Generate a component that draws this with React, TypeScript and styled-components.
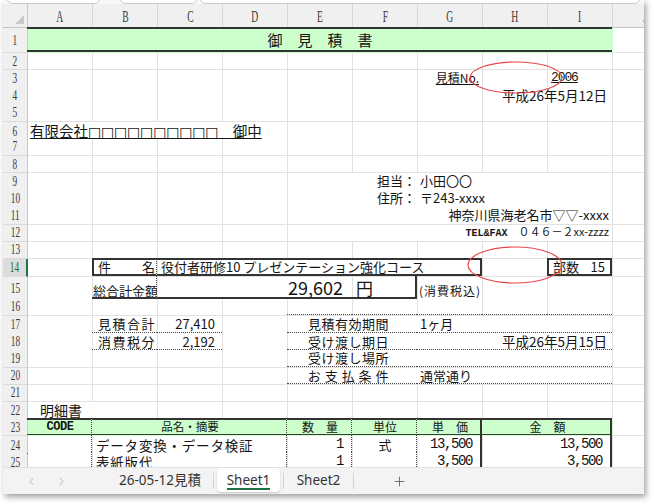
import React from 'react';
import styled, { createGlobalStyle } from 'styled-components';
import { ChevronLeft, ChevronRight, Plus } from 'lucide-react';

const JP = '"Noto Sans CJK JP", "Noto Sans", sans-serif';
const MONO = '"Liberation Mono", "DejaVu Sans Mono", "Noto Sans CJK JP", monospace';
const SERIF = '"Liberation Serif", "DejaVu Serif", serif';
const UI = '"Noto Sans", "Noto Sans CJK JP", sans-serif';
const GREEN = '#ccffcc';
const GRID = '#e1e1e1';
const COLS = '25px repeat(10, 65px)';

type Line = 'solid' | 'thin' | 'dot';
const line = (b?: Line) =>
  b === 'solid' ? '2px solid #333' : b === 'thin' ? '1px solid #3a3a3a' : b === 'dot' ? '1px dotted #444' : 'none';

interface CellDef {
  c: number;
  s?: number;
  t?: React.ReactNode;
  a?: 'left' | 'right' | 'center' | 'between';
  fill?: string;
  size?: number;
  font?: 'jp' | 'mono';
  bt?: Line;
  bb?: Line;
  bl?: Line;
  br?: Line;
  pl?: number;
  pr?: number;
  open?: boolean;
  u?: boolean;
  ls?: number;
  bold?: boolean;
  mid?: boolean;
  clip?: boolean;
}

const GlobalStyle = createGlobalStyle`
  html, body { margin: 0; padding: 0; background: #fff; }
  body { font-family: ${JP}; }
  * { box-sizing: border-box; }
`;

const Page = styled.div`
  width: 654px;
  height: 504px;
  padding: 0 10px 10px 3px;
`;

const Window = styled.div`
  position: relative;
  height: 100%;
  display: flex;
  flex-direction: column;
  background: #fff;
  overflow: hidden;
  box-shadow: 2px 3px 6px rgba(0, 0, 0, 0.38);
`;

const TopStrip = styled.div`
  flex: none;
  height: 4px;
  display: flex;
  align-items: flex-end;
  background: #f7f7f7;
  overflow: hidden;
`;

const StripBox = styled.div<{ $w: number; $ml: number }>`
  flex: none;
  width: ${p => p.$w}px;
  margin-left: ${p => p.$ml}px;
  height: 10px;
  border: 1px solid #c9c9c9;
  border-radius: 5px;
  background: #fff;
`;

const Sheet = styled.div`
  flex: 1;
  min-height: 0;
  overflow: hidden;
  display: flex;
  flex-direction: column;
`;

const Row = styled.div<{ $h: number }>`
  flex: none;
  display: grid;
  grid-template-columns: ${COLS};
  height: ${p => p.$h}px;
`;

const Corner = styled.div`
  background: #f0f0f0;
  border-right: 1px solid #c8c8c8;
  border-bottom: 1px solid #c4c4c4;
  display: flex;
  align-items: flex-end;
  justify-content: flex-end;
  padding: 0 3px 3px 0;
`;

const ColHead = styled.div`
  background: #f0f0f0;
  border-right: 1px solid #d6d6d6;
  border-bottom: 1px solid #c4c4c4;
  display: flex;
  align-items: flex-end;
  justify-content: center;
  padding-bottom: 2px;
  font-family: ${SERIF};
  font-size: 16px;
  line-height: 1;
  color: #3a3a3a;
`;

const RowHead = styled.div<{ $active?: boolean }>`
  background: ${p => (p.$active ? '#dcdcdc' : '#f0f0f0')};
  border-right: ${p => (p.$active ? '2px solid #217346' : '1px solid #c8c8c8')};
  border-bottom: 1px solid #dadada;
  display: flex;
  align-items: center;
  justify-content: center;
  font-family: ${SERIF};
  font-size: 15px;
  line-height: 1;
  color: ${p => (p.$active ? '#1d6a3d' : '#3a3a3a')};
`;

const Narrow = styled.span<{ $sx: number }>`
  display: inline-block;
  transform: scaleX(${p => p.$sx});
`;

const justify = (a: string) =>
  a === 'right' ? 'flex-end' : a === 'center' ? 'center' : 'flex-start';

const CellBox = styled.div<{
  $span: number;
  $align: string;
  $fill?: string;
  $open?: boolean;
  $pl: number;
  $pr: number;
  $mid?: boolean;
  $bt?: Line;
  $bb?: Line;
  $bl?: Line;
  $br?: Line;
}>`
  position: relative;
  grid-column: span ${p => p.$span};
  min-width: 0;
  display: flex;
  align-items: ${p => (p.$mid ? 'center' : 'flex-end')};
  justify-content: ${p => justify(p.$align)};
  padding: 0 ${p => p.$pr}px 0 ${p => p.$pl}px;
  background: ${p => p.$fill ?? '#fff'};
  border-right: 1px solid ${p => (p.$fill || p.$open ? 'transparent' : GRID)};
  border-bottom: 1px solid ${p => (p.$fill ? 'transparent' : GRID)};

  &::after {
    content: '';
    position: absolute;
    top: -1px;
    left: -1px;
    right: 0;
    bottom: 0;
    pointer-events: none;
    border-top: ${p => line(p.$bt)};
    border-bottom: ${p => line(p.$bb)};
    border-left: ${p => line(p.$bl)};
    border-right: ${p => line(p.$br)};
  }
`;

const CellText = styled.span<{
  $size: number;
  $font: 'jp' | 'mono';
  $u?: boolean;
  $ls?: number;
  $bold?: boolean;
  $between?: boolean;
  $clip?: boolean;
}>`
  font-family: ${p => (p.$font === 'mono' ? MONO : JP)};
  font-size: ${p => p.$size}px;
  font-weight: ${p => (p.$bold ? 700 : 400)};
  letter-spacing: ${p => p.$ls ?? 0}px;
  line-height: 1.2;
  white-space: nowrap;
  overflow: ${p => (p.$clip ? 'hidden' : 'visible')};
  color: #141414;
  padding-bottom: 1px;
  text-decoration: ${p => (p.$u ? 'underline' : 'none')};
  text-underline-offset: 1px;
  display: ${p => (p.$between ? 'flex' : 'block')};
  justify-content: space-between;
  flex: ${p => (p.$between ? 1 : '0 1 auto')};
  min-width: 0;
`;

const Boxes = styled.span`
  font-family: "DejaVu Sans", ${JP};
  font-size: 14px;
  letter-spacing: -0.2px;
  color: #141414;
`;

const Tel = styled.span`
  font-family: "Liberation Sans Narrow", "Liberation Mono", monospace;
  font-weight: 700;
  font-size: 10px;
`;

const TabBar = styled.div`
  flex: none;
  height: 27px;
  display: flex;
  align-items: stretch;
  background: #f3f3f3;
  border-top: 1px solid #e2e2e2;
  font-family: ${UI};
  font-size: 13.5px;
  color: #333;
`;

const Nav = styled.div`
  flex: none;
  width: 104px;
  display: flex;
  align-items: center;
  gap: 14px;
  padding-left: 20px;
  color: #a3a3a3;
`;

const NavBtn = styled.span`
  width: 16px;
  display: flex;
  justify-content: center;
`;

const TabSlot = styled.div<{ $w: number }>`
  flex: none;
  width: ${p => p.$w}px;
  display: flex;
  padding: 0 3px 2px;
`;

const TabFace = styled.div<{ $active?: boolean }>`
  flex: 1;
  display: flex;
  align-items: center;
  justify-content: center;
  border-radius: 4px;
  background: ${p => (p.$active ? '#fff' : 'transparent')};
  box-shadow: ${p => (p.$active ? '0 1px 2px rgba(0,0,0,0.18)' : 'none')};
`;

const TabLabel = styled.span<{ $active?: boolean }>`
  line-height: 16px;
  padding-top: 2px;
  border-bottom: 2px solid ${p => (p.$active ? '#1e7145' : 'transparent')};
  white-space: nowrap;
`;

const Sep = styled.span`
  flex: none;
  align-self: center;
  width: 1px;
  height: 16px;
  background: #d2d2d2;
`;

const PlusBtn = styled.div`
  flex: none;
  width: 30px;
  margin-left: 30px;
  display: flex;
  align-items: center;
  justify-content: center;
  color: #555;
`;

const Marks = styled.svg`
  position: absolute;
  left: 0;
  top: 0;
  pointer-events: none;
`;

const CornerMark = () => (
  <svg width="9" height="9" viewBox="0 0 9 9">
    <path d="M9 0 L9 9 L0 9 Z" fill="#c9c9c9" />
  </svg>
);

function Cell({ d }: { d: CellDef }) {
  const between = d.a === 'between';
  return (
    <CellBox
      $span={d.s ?? 1}
      $align={d.a ?? 'left'}
      $fill={d.fill}
      $open={d.open}
      $pl={d.pl ?? 2}
      $pr={d.pr ?? 2}
      $mid={d.mid}
      $bt={d.bt}
      $bb={d.bb}
      $bl={d.bl}
      $br={d.br}
    >
      {d.t !== undefined && (
        <CellText
          $size={d.size ?? 13}
          $font={d.font ?? 'jp'}
          $u={d.u}
          $ls={d.ls}
          $bold={d.bold}
          $between={between}
          $clip={d.clip}
        >
          {d.t}
        </CellText>
      )}
    </CellBox>
  );
}

const NUM = { font: 'mono' as const, size: 14, ls: -1.4, a: 'right' as const };

const data: Record<number, CellDef[]> = {
  1: [{ c: 1, s: 9, t: '御　見　積　書', a: 'center', fill: GREEN, size: 15, bt: 'solid', bb: 'solid', mid: true }],
  3: [
    { c: 7, t: '見積No.', a: 'right', size: 12, u: true, pr: 3 },
    { c: 9, t: '2006', font: 'mono', size: 13, ls: -1.1, u: true, pl: 3 },
  ],
  4: [{ c: 8, s: 2, t: '平成26年5月12日', a: 'right', size: 13.5, pr: 5 }],
  6: [
    {
      c: 1,
      s: 4,
      t: (
        <>
          有限会社<Boxes>□□□□□□□□□□</Boxes>　御中
        </>
      ),
      size: 14.5,
      u: true,
      pl: 2,
    },
  ],
  9: [
    { c: 5, open: true },
    { c: 6, t: '担当：', a: 'right', open: true, pr: 1 },
    { c: 7, s: 3, t: '小田〇〇', pl: 2 },
  ],
  10: [
    { c: 5, open: true },
    { c: 6, t: '住所：', a: 'right', open: true, pr: 1 },
    { c: 7, s: 3, t: '〒243-xxxx', pl: 2 },
  ],
  11: [{ c: 5, s: 5, t: '神奈川県海老名市▽▽-xxxx', a: 'right', pr: 3 }],
  12: [
    {
      c: 5,
      s: 5,
      t: (
        <>
          <Tel>TEL&amp;FAX</Tel>　０４６－２xx-zzzz
        </>
      ),
      a: 'right',
      size: 11,
      pr: 3,
    },
  ],
  14: [
    { c: 2, t: (<><span>件</span><span>名</span></>), a: 'between', pl: 5, pr: 2, bt: 'solid', bb: 'solid', bl: 'solid', br: 'dot' },
    { c: 3, s: 5, t: '役付者研修10 プレゼンテーション強化コース', pl: 3, bt: 'solid', bb: 'solid', br: 'solid' },
    { c: 9, t: (<><span>部数</span><span>15</span></>), a: 'between', pl: 5, pr: 7, bt: 'solid', bb: 'solid', bl: 'solid', br: 'solid' },
  ],
  15: [
    { c: 2, t: '総合計金額', pl: 0, pr: 0, bb: 'solid', br: 'dot', clip: true },
    { c: 3, s: 3, t: '29,602', a: 'right', size: 18, pr: 9, bb: 'solid' },
    { c: 6, t: '円', size: 17, pl: 3, bb: 'solid', br: 'solid' },
    { c: 7, t: '(消費税込)', size: 12, ls: 1, pl: 1 },
  ],
  16: [5, 6, 7, 8, 9].map(c => ({ c, bb: 'dot' as Line })),
  17: [
    { c: 2, t: '見積合計', pl: 5, ls: 1.5, bb: 'dot' },
    { c: 3, t: '27,410', a: 'right', pr: 7, bb: 'dot' },
    { c: 5, s: 2, t: '見積有効期間', a: 'right', pr: 28, ls: 0.5, bb: 'dot', open: true },
    { c: 7, s: 3, t: '1ヶ月', pl: 2, bb: 'dot' },
  ],
  18: [
    { c: 2, t: '消費税分', pl: 5, ls: 1.5, bb: 'dot' },
    { c: 3, t: '2,192', a: 'right', pr: 7, bb: 'dot' },
    { c: 5, s: 2, t: '受け渡し期日', a: 'right', pr: 28, ls: 0.5, bb: 'dot', open: true },
    { c: 7, s: 3, t: '平成26年5月15日', a: 'right', size: 13.5, pr: 5, bb: 'dot' },
  ],
  19: [
    { c: 5, s: 2, t: '受け渡し場所', a: 'right', pr: 28, ls: 0.5, bb: 'dot', open: true },
    { c: 7, s: 3, bb: 'dot' },
  ],
  20: [
    { c: 5, s: 2, t: 'お 支 払 条 件', a: 'right', pr: 28, ls: 0.5, bb: 'dot', open: true },
    { c: 7, s: 3, t: '通常通り', pl: 2, bb: 'dot' },
  ],
  22: [{ c: 1, s: 2, t: '明細書', pl: 12, size: 14 }],
  23: [
    { c: 1, t: 'CODE', a: 'center', fill: GREEN, font: 'mono', bold: true, size: 12, ls: -0.4, bt: 'solid', bb: 'thin', br: 'dot' },
    { c: 2, s: 3, t: '品名・摘要', a: 'center', fill: GREEN, size: 11.5, bt: 'solid', bb: 'thin', br: 'dot' },
    { c: 5, t: '数　量', a: 'center', fill: GREEN, size: 12, bt: 'solid', bb: 'thin', br: 'dot' },
    { c: 6, t: '単位', a: 'center', fill: GREEN, size: 12, bt: 'solid', bb: 'thin', br: 'dot' },
    { c: 7, t: '単　価', a: 'center', fill: GREEN, size: 12, bt: 'solid', bb: 'thin', br: 'solid' },
    { c: 8, s: 2, t: '金　額', a: 'center', fill: GREEN, size: 12, bt: 'solid', bb: 'thin', br: 'solid' },
  ],
  24: [
    { c: 1, bb: 'dot', br: 'dot' },
    { c: 2, s: 3, t: 'データ変換・データ検証', pl: 3, size: 13.5, ls: 0.8, bb: 'dot', br: 'dot' },
    { c: 5, t: '1', ...NUM, pr: 9, bb: 'dot', br: 'dot' },
    { c: 6, t: '式', a: 'center', bb: 'dot', br: 'dot' },
    { c: 7, t: '13,500', ...NUM, pr: 10, bb: 'dot', br: 'solid' },
    { c: 8, s: 2, t: '13,500', ...NUM, pr: 10, bb: 'dot', br: 'solid' },
  ],
  25: [
    { c: 1, bb: 'dot', br: 'dot' },
    { c: 2, s: 3, t: '表紙版代', pl: 3, size: 13.5, ls: 0.8, bb: 'dot', br: 'dot' },
    { c: 5, t: '1', ...NUM, pr: 9, bb: 'dot', br: 'dot' },
    { c: 6, bb: 'dot', br: 'dot' },
    { c: 7, t: '3,500', ...NUM, pr: 10, bb: 'dot', br: 'solid' },
    { c: 8, s: 2, t: '3,500', ...NUM, pr: 10, bb: 'dot', br: 'solid' },
  ],
};

const rowHeight = (n: number) => (n === 1 ? 25 : n === 14 ? 18 : n === 15 ? 22 : 17.17);

function SheetRow({ n }: { n: number }) {
  const defs = data[n] ?? [];
  const cells: React.ReactNode[] = [];
  let col = 1;
  while (col <= 10) {
    const d = defs.find(x => x.c === col);
    if (d) {
      cells.push(<Cell key={col} d={d} />);
      col += d.s ?? 1;
    } else {
      cells.push(<Cell key={col} d={{ c: col }} />);
      col += 1;
    }
  }
  return (
    <Row $h={rowHeight(n)}>
      <RowHead $active={n === 14}>
        <Narrow $sx={0.62}>{n}</Narrow>
      </RowHead>
      {cells}
    </Row>
  );
}

const LETTERS = ['A', 'B', 'C', 'D', 'E', 'F', 'G', 'H', 'I', 'J'];

export default function App() {
  const rows = Array.from({ length: 25 }, (_, i) => i + 1);
  return (
    <>
      <GlobalStyle />
      <Page>
        <Window>
          <TopStrip>
            <StripBox $w={93} $ml={4} />
            <StripBox $w={77} $ml={20} />
            <StripBox $w={440} $ml={3} />
          </TopStrip>
          <Sheet>
            <Row $h={24}>
              <Corner>
                <CornerMark />
              </Corner>
              {LETTERS.map(l => (
                <ColHead key={l}>
                  <Narrow $sx={0.6}>{l}</Narrow>
                </ColHead>
              ))}
            </Row>
            {rows.map(n => (
              <SheetRow key={n} n={n} />
            ))}
          </Sheet>
          <TabBar>
            <Nav>
              <NavBtn>
                <ChevronLeft size={13} strokeWidth={1.4} />
              </NavBtn>
              <NavBtn>
                <ChevronRight size={13} strokeWidth={1.4} />
              </NavBtn>
            </Nav>
            <TabSlot $w={106}>
              <TabFace>
                <TabLabel>26-05-12見積</TabLabel>
              </TabFace>
            </TabSlot>
            <Sep />
            <TabSlot $w={69}>
              <TabFace $active>
                <TabLabel $active>Sheet1</TabLabel>
              </TabFace>
            </TabSlot>
            <Sep />
            <TabSlot $w={69}>
              <TabFace>
                <TabLabel>Sheet2</TabLabel>
              </TabFace>
            </TabSlot>
            <Sep />
            <PlusBtn>
              <Plus size={15} strokeWidth={1.3} />
            </PlusBtn>
          </TabBar>
          <Marks width={641} height={494}>
            <ellipse cx={513} cy={77.5} rx={46} ry={15.5} fill="none" stroke="#e8474a" strokeWidth={1.2} />
            <ellipse cx={512} cy={265} rx={47} ry={18} fill="none" stroke="#e8474a" strokeWidth={1.2} />
          </Marks>
        </Window>
      </Page>
    </>
  );
}
